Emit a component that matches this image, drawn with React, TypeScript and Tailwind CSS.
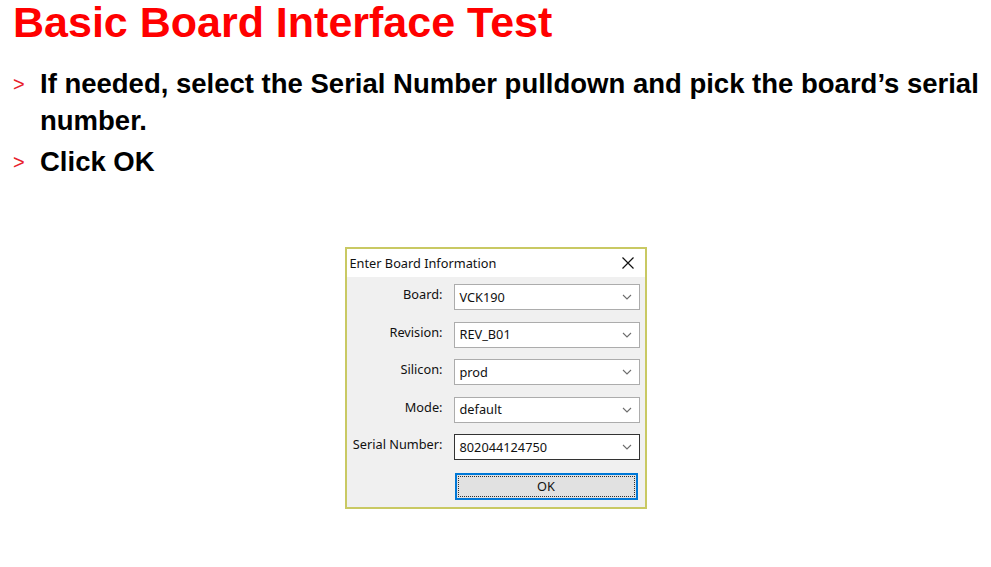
import React from "react";

const Chevron = () => (
  <svg width="10" height="6" viewBox="0 0 10 6" className="shrink-0">
    <path d="M1 1 L5 5 L9 1" fill="none" stroke="#6d6d6d" strokeWidth="1.1" />
  </svg>
);

const Combo = ({ value, focused }: { value: string; focused?: boolean }) => (
  <div
    className={`flex h-[26px] w-[186px] items-center justify-between border bg-white pl-[5px] pr-[7px] ${
      focused ? "border-[#333333]" : "border-[#acacac]"
    }`}
  >
    <span className="text-[12.75px] leading-none text-[#111]">{value}</span>
    <Chevron />
  </div>
);

const Row = ({ label, value, focused }: { label: string; value: string; focused?: boolean }) => (
  <div className="flex items-start">
    <div className="w-[107px] whitespace-nowrap pr-[11px] pt-[2px] text-right text-[12.75px] leading-[16px] text-[#111]">
      {label}
    </div>
    <Combo value={value} focused={focused} />
  </div>
);

export default function App() {
  return (
    <div className="h-[567px] w-[991px] bg-white" style={{ fontFamily: '"Liberation Sans", Arial, sans-serif' }}>
      <h1 className="pl-[13px] pt-0 text-[43px] font-bold leading-[44px] text-[#ff0000]">Basic Board Interface Test</h1>
      <ul className="mt-[21px] flex flex-col gap-[4px] pl-[13px]">
        <li className="flex">
          <span className="w-[27px] shrink-0 pt-[1px] text-[20px] leading-[37px] text-[#e8202a]">&gt;</span>
          <span className="text-[27.5px] font-bold leading-[37px] text-black">
            If needed, select the Serial Number pulldown and pick the board’s serial number.
          </span>
        </li>
        <li className="flex">
          <span className="w-[27px] shrink-0 pt-[1px] text-[20px] leading-[37px] text-[#e8202a]">&gt;</span>
          <span className="text-[27.5px] font-bold leading-[37px] text-black">Click OK</span>
        </li>
      </ul>
      <div className="mt-[66px] flex justify-center">
        <div
          className="flex w-[302px] flex-col border-2 border-[#c9c963] bg-[#f0f0f0]"
          style={{ fontFamily: '"Noto Sans", "Open Sans", sans-serif' }}
        >
          <div className="flex h-[28px] items-center justify-between bg-white pl-[3px] pr-[11px]">
            <span className="text-[12.75px] leading-none text-[#111]">Enter Board Information</span>
            <svg width="12" height="12" viewBox="0 0 12 12">
              <path d="M0.5 0.5 L11.5 11.5 M11.5 0.5 L0.5 11.5" stroke="#111" strokeWidth="1.2" />
            </svg>
          </div>
          <div className="flex flex-col gap-[11.5px] pb-[7px] pt-[7px]">
            <Row label="Board:" value="VCK190" />
            <Row label="Revision:" value="REV_B01" />
            <Row label="Silicon:" value="prod" />
            <Row label="Mode:" value="default" />
            <Row label="Serial Number:" value="802044124750" focused />
            <div className="mt-[1.5px] flex pl-[108px]">
              <div className="flex h-[27px] w-[183px] items-center justify-center border-2 border-[#0078d7] bg-[#e1e1e1] p-[1px]">
                <div className="flex h-full w-full items-center justify-center border border-dotted border-[#333]">
                  <span className="text-[12.75px] leading-none text-[#111]">OK</span>
                </div>
              </div>
            </div>
          </div>
        </div>
      </div>
    </div>
  );
}
